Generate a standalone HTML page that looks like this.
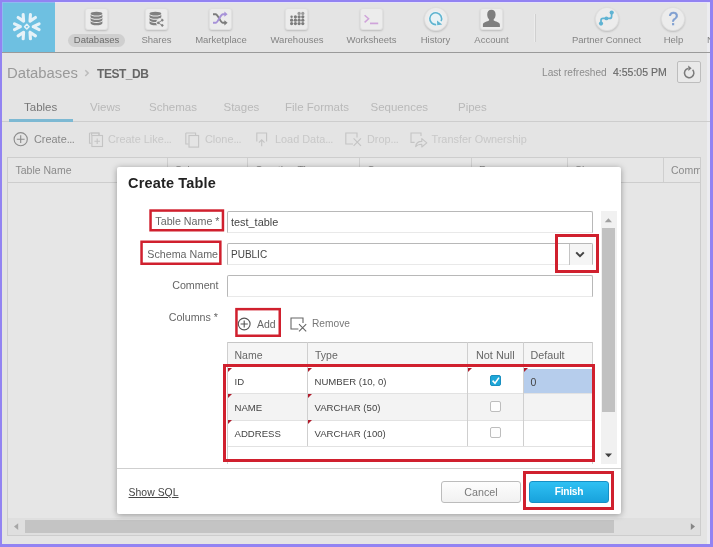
<!DOCTYPE html>
<html lang="en">
<head>
<meta charset="utf-8">
<title>Create Table</title>
<style>
*{box-sizing:border-box;margin:0;padding:0}
html,body{width:713px;height:547px;overflow:hidden;background:#9283f2}
body{font-family:"Liberation Sans",Arial,sans-serif;font-size:11px;color:#777;position:relative}
.abs{position:absolute}
#page{position:absolute;left:2px;top:2px;width:708px;height:542px;background:#e4e4e4;overflow:hidden}
/* coordinates inside #page are offset by (-2,-2) from screenshot: use wrapper shifted */
#w{position:absolute;left:-2px;top:-2px;width:713px;height:547px;will-change:transform}
.t{position:absolute;white-space:nowrap;line-height:14px;height:14px}
.c{transform:translateX(-50%)}
#logo{left:2px;top:2px;width:53px;height:50px;background:#6ec0e1}
#hline{left:2px;top:52px;width:708px;height:1px;background:#9a9a9a}
.ib{position:absolute;top:8px;width:23px;height:22px;border-radius:3px;background:#ececec;box-shadow:inset 0 0 0 1px rgba(0,0,0,.05),0 1px 2px rgba(0,0,0,.18)}
.ic{position:absolute;top:7px;width:24px;height:24px;border-radius:12px;background:#ececec;box-shadow:inset 0 0 0 1px rgba(0,0,0,.06),0 1px 2px rgba(0,0,0,.18)}
.nl{position:absolute;top:33px;font-size:9.5px;color:#848484;white-space:nowrap;line-height:14px;transform:translateX(-50%)}
.tab{position:absolute;top:100px;font-size:11.5px;color:#b9b9b9;white-space:nowrap;line-height:14px}
.tb{position:absolute;top:132px;font-size:10.9px;color:#c8c8c8;white-space:nowrap;line-height:14px}
.vs{position:absolute;top:158px;width:1px;height:24px;background:#cfcfcf}
/* dialog */
#dlg{left:117px;top:167px;width:504px;height:347px;background:#fff;border-radius:2px;box-shadow:0 1px 6px rgba(0,0,0,.35)}
.lbl{position:absolute;font-size:10.7px;color:#666;white-space:nowrap;line-height:14px;text-align:right}
.inp{position:absolute;left:227px;width:366px;height:22px;border:1px solid #b8b8b8;border-bottom-color:#e9e9e9;background:#fff;border-radius:2px 2px 0 0}
.red{position:absolute;border:2px solid #d0202e}
.cell{position:absolute;font-size:10.5px;color:#444;white-space:nowrap;line-height:14px}
.hd{position:absolute;font-size:10.5px;color:#666;white-space:nowrap;line-height:14px}
.tb i{font-style:normal;letter-spacing:-0.5px}
.tri{position:absolute;width:0;height:0;border-top:4px solid #b01c2c;border-right:4px solid transparent}
.cb{position:absolute;left:490px;width:11px;height:11px;border:1px solid #bdbdbd;border-radius:2px;background:#fdfdfd}
</style>
</head>
<body>
<div id="page"><div id="w">

<!-- header -->
<div class="abs" style="left:707px;top:2px;width:3px;height:542px;background:#ececf0"></div>
<div class="abs" id="logo"></div>
<div class="abs" style="left:2px;top:2px;width:53px;height:1px;background:#8fbaf0"></div><div class="abs" style="left:2px;top:2px;width:1px;height:50px;background:#8fbaf0"></div>
<div class="abs" id="hline"></div>
<div class="abs" style="left:55px;top:2px;width:655px;height:1px;background:#e6e2fa"></div>

<div class="ib" style="left:85px"></div>
<div class="ib" style="left:145px"></div>
<div class="ib" style="left:209px"></div>
<div class="ib" style="left:285px"></div>
<div class="ib" style="left:360px"></div>
<div class="ic" style="left:424px"></div>
<div class="ib" style="left:480px"></div>
<div class="ic" style="left:595px"></div>
<div class="ic" style="left:661px"></div>

<div class="abs" style="left:68px;top:34px;width:57px;height:13px;border-radius:7px;background:#cfcfcf"></div>
<div class="nl" style="left:96.5px;color:#6a6a6a">Databases</div>
<div class="nl" style="left:156.5px">Shares</div>
<div class="nl" style="left:221px">Marketplace</div>
<div class="nl" style="left:297px">Warehouses</div>
<div class="nl" style="left:371.5px">Worksheets</div>
<div class="nl" style="left:435.5px">History</div>
<div class="nl" style="left:491.5px">Account</div>
<div class="nl" style="left:606.5px">Partner Connect</div>
<div class="nl" style="left:673.5px">Help</div>
<div class="nl" style="left:707px;transform:none">N</div>
<div class="abs" style="left:534px;top:14px;width:1px;height:28px;background:#ececec"></div><div class="abs" style="left:535px;top:14px;width:1px;height:28px;background:#d0d0d0"></div>

<div class="t c" style="left:673.3px;top:9px;font-size:17.5px;line-height:20px;height:20px;color:#7f9fd1;-webkit-text-stroke:0.5px #7f9fd1">?</div>
<!-- breadcrumb -->
<div class="t" style="left:7px;top:65px;font-size:14.85px;line-height:16px;height:16px;color:#9a9a9a">Databases</div>
<div class="t" style="left:97px;top:66px;font-size:12px;letter-spacing:-0.45px;line-height:16px;height:16px;color:#666;font-weight:bold">TEST_DB</div>
<div class="t" style="left:542px;top:65.5px;font-size:10.15px;color:#8c8c8c">Last refreshed</div>
<div class="t" style="left:613px;top:64.8px;font-size:10.5px;color:#686868;-webkit-text-stroke:0.15px #686868">4:55:05 PM</div>
<div class="abs" style="left:677px;top:61px;width:24px;height:22px;border:1px solid #bdbdbd;border-radius:2px;background:#e9e9e9"></div>

<!-- tabs -->
<div class="tab" style="left:24px;color:#777">Tables</div>
<div class="tab" style="left:90px">Views</div>
<div class="tab" style="left:149px">Schemas</div>
<div class="tab" style="left:223.5px">Stages</div>
<div class="tab" style="left:285px">File Formats</div>
<div class="tab" style="left:370.5px">Sequences</div>
<div class="tab" style="left:458px">Pipes</div>
<div class="abs" style="left:2px;top:121px;width:708px;height:1px;background:#cdcdcd"></div>
<div class="abs" style="left:9px;top:119px;width:64px;height:3px;background:#7db9d3"></div>

<!-- toolbar -->
<div class="tb" style="left:34px;color:#888">Create<i>...</i></div>
<div class="tb" style="left:108px">Create Like<i>...</i></div>
<div class="tb" style="left:205px">Clone<i>...</i></div>
<div class="tb" style="left:275px">Load Data<i>...</i></div>
<div class="tb" style="left:367px">Drop<i>...</i></div>
<div class="tb" style="left:431.5px">Transfer Ownership</div>

<!-- table -->
<div class="abs" style="left:7px;top:157px;width:694px;height:379px;border:1px solid #cdcdcd;background:#e6e6e6"></div>
<div class="abs" style="left:8px;top:182px;width:692px;height:1px;background:#cdcdcd"></div>
<div class="vs" style="left:167px"></div>
<div class="vs" style="left:247px"></div>
<div class="vs" style="left:359px"></div>
<div class="vs" style="left:471px"></div>
<div class="vs" style="left:567px"></div>
<div class="vs" style="left:663px"></div>
<div class="t" style="left:15.5px;top:163px;font-size:10.5px;color:#8a8a8a">Table Name</div>
<div class="t" style="left:671px;top:163px;font-size:10.5px;color:#8a8a8a;width:29px;overflow:hidden">Comment</div>

<svg class="abs" style="left:0;top:0" width="713" height="547" viewBox="0 0 713 547"><g transform="translate(26.8 26.7)" fill="none" stroke="#e6f2f8" stroke-width="3.1" stroke-linecap="round" stroke-linejoin="round"><path transform="rotate(0)" d="M12.3 -2.9L6.4 0L12.3 2.9"/><path transform="rotate(60)" d="M12.3 -2.9L6.4 0L12.3 2.9"/><path transform="rotate(120)" d="M12.3 -2.9L6.4 0L12.3 2.9"/><path transform="rotate(180)" d="M12.3 -2.9L6.4 0L12.3 2.9"/><path transform="rotate(240)" d="M12.3 -2.9L6.4 0L12.3 2.9"/><path transform="rotate(300)" d="M12.3 -2.9L6.4 0L12.3 2.9"/><path d="M0 -2.3L2.3 0L0 2.3L-2.3 0Z" stroke-width="1.5"/></g><g fill="#808080"><ellipse cx="96.5" cy="13.7" rx="5.9" ry="1.9"/><path d="M90.6 14.6a5.9 1.9 0 0 0 11.8 0v2.3a5.9 1.9 0 0 1 -11.8 0z"/><path d="M90.6 17.8a5.9 1.9 0 0 0 11.8 0v2.3a5.9 1.9 0 0 1 -11.8 0z"/><path d="M90.6 21.0a5.9 1.9 0 0 0 11.8 0v2.3a5.9 1.9 0 0 1 -11.8 0z"/></g><g fill="#808080"><ellipse cx="155.4" cy="13.7" rx="5.9" ry="1.9"/><path d="M149.5 14.6a5.9 1.9 0 0 0 11.8 0v2.3a5.9 1.9 0 0 1 -11.8 0z"/><path d="M149.5 17.8a5.9 1.9 0 0 0 11.8 0v2.3a5.9 1.9 0 0 1 -11.8 0z"/><path d="M149.5 21.0a5.9 1.9 0 0 0 11.8 0v2.3a5.9 1.9 0 0 1 -11.8 0z"/></g><circle cx="160.3" cy="22.8" r="4.2" fill="#ebebeb"/><g stroke="#808080" stroke-width="0.9" fill="#808080"><path d="M162.3 20.2L158.2 22.8L162.3 25.4" fill="none"/><circle cx="162.3" cy="20.2" r="0.9"/><circle cx="158.2" cy="22.8" r="0.9"/><circle cx="162.3" cy="25.4" r="0.9"/></g><g fill="none" stroke-width="2" stroke-linecap="butt"><path d="M213 14.2h2.6c2.6 0 4.6 8.6 7.4 8.6h2" stroke="#7c7c7c"/><path d="M224.4 20.2L227.6 22.8L224.4 25.4Z" fill="#7c7c7c" stroke="none"/><path d="M213 22.8h2.6c2.6 0 4.6 -8.6 7.4 -8.6h2" stroke="#a792d8"/><path d="M224.4 11.6L227.6 14.2L224.4 16.8Z" fill="#a792d8" stroke="none"/></g><circle cx="299.1" cy="13.4" r="1.6" fill="#9a9a9a"/><circle cx="302.8" cy="13.4" r="1.6" fill="#9a9a9a"/><circle cx="291.6" cy="16.8" r="1.2" fill="#7c7c7c"/><circle cx="295.4" cy="16.8" r="1.6" fill="#7c7c7c"/><circle cx="299.1" cy="16.8" r="1.6" fill="#7c7c7c"/><circle cx="302.8" cy="16.8" r="1.6" fill="#7c7c7c"/><circle cx="291.6" cy="20.2" r="1.6" fill="#7c7c7c"/><circle cx="295.4" cy="20.2" r="1.6" fill="#7c7c7c"/><circle cx="299.1" cy="20.2" r="1.6" fill="#7c7c7c"/><circle cx="302.8" cy="20.2" r="1.6" fill="#7c7c7c"/><circle cx="291.6" cy="23.6" r="1.6" fill="#7c7c7c"/><circle cx="295.4" cy="23.6" r="1.6" fill="#7c7c7c"/><circle cx="299.1" cy="23.6" r="1.6" fill="#7c7c7c"/><circle cx="302.8" cy="23.6" r="1.6" fill="#7c7c7c"/><g fill="none" stroke="#cfa3da" stroke-width="1.5"><path d="M364.6 15.2L368.6 18.8L364.6 22.4"/><path d="M370 23.4h8.2" stroke-width="1.7"/></g><circle cx="435.7" cy="18.7" r="7.6" fill="#e9f3f6"/><g fill="none" stroke="#5fb4d0" stroke-width="1.6"><path d="M436.2 24.6A5.9 5.9 0 1 1 441.1 21.1"/><path d="M437 20.6L437.2 25.2L442.2 24.6Z" fill="#5fb4d0" stroke="none"/></g><path d="M491.4 9.8c2.6 0 4.2 1.9 4.2 4.6c0 2.2 -0.9 3.9 -1.9 4.9v1.3c1.4 0.9 6.2 1.6 6.2 4.2v2.2h-17v-2.2c0 -2.6 4.8 -3.3 6.2 -4.2v-1.3c-1 -1 -1.9 -2.7 -1.9 -4.9c0 -2.7 1.6 -4.6 4.2 -4.6z" fill="#7e7e7e"/><g fill="none" stroke="#5fb3d3" stroke-width="1.7" stroke-linejoin="round"><path d="M601 23.4v-3.2c0 -1.2 1 -1.8 2 -1.8h6.6c1.2 0 2 -0.8 2 -2v-3.6"/></g><g fill="#5fb3d3"><circle cx="601" cy="23.6" r="2.1"/><circle cx="606.4" cy="18.4" r="1.9"/><circle cx="611.7" cy="12.6" r="2.1"/></g><g fill="none" stroke="#7a7a7a" stroke-width="1.5"><path d="M692.6 69.7a4.7 4.7 0 1 1 -4.6 -1.3"/><path d="M688.2 65.6L691.6 68.2L688.4 70.9" stroke-linejoin="miter" fill="#7a7a7a" stroke="none"/></g><path d="M85.3 70.2L88.2 73.1L85.3 76" fill="none" stroke="#bcbcbc" stroke-width="1.5"/><g fill="none" stroke="#8c8c8c" stroke-width="1.1"><circle cx="20.7" cy="139.2" r="6.6"/><path d="M16.8 139.2h7.8M20.7 135.3v7.8"/></g><g fill="none" stroke="#c4c4c4" stroke-width="1.1"><path d="M91.6 135.4v-2.4h7.4v2.4"/><path d="M89.5 133h9.5v2.2M89.5 133v10.2h2"/><rect x="91.9" y="135.5" width="10.6" height="11" fill="#e4e4e4"/><path d="M94.4 141.2h5.6M97.2 138.4v5.6"/><path d="M185.8 133h9.8v2.2M185.8 133v11h2.8"/><rect x="189" y="135.5" width="9.6" height="11.6" fill="#e4e4e4"/><path d="M256.8 141.4v-8.4h9.8v8.4"/><path d="M261.7 146.2v-6.4M258.9 142.6l2.8 -2.8l2.8 2.8"/><path d="M353 144h-7.2v-11h11.2v4.6"/><path d="M353.6 138.4l7.4 7.4M361 138.4l-7.4 7.4"/><path d="M414.6 142.4h-3.6v-9.4h10v3"/><path d="M415.6 146.6c0.4 -3.6 2.6 -5.2 6.2 -5.2v-2.8l5 4.2l-5 4.2v-2.8c-2.8 0 -4.8 0.6 -6.2 2.4z" stroke-linejoin="round"/></g></svg>
<div class="t" style="left:175px;top:163px;font-size:10.5px;color:#8a8a8a">Schema</div>
<div class="t" style="left:255px;top:163px;font-size:10.5px;color:#8a8a8a">Creation Time</div>
<div class="t" style="left:367px;top:163px;font-size:10.5px;color:#8a8a8a">Owner</div>
<div class="t" style="left:479px;top:163px;font-size:10.5px;color:#8a8a8a">Rows</div>
<div class="t" style="left:575px;top:163px;font-size:10.5px;color:#8a8a8a">Size</div>
<!-- bottom scrollbar -->
<div class="abs" style="left:8px;top:518px;width:692px;height:17px;background:#dfdfdf"></div>
<div class="abs" style="left:25px;top:520px;width:589px;height:13px;background:#c4c4c4"></div>

<svg class="abs" style="left:0;top:0" width="713" height="547" viewBox="0 0 713 547"><path d="M18.2 523.2L14 526.6L18.2 530Z" fill="#a6a6a6"/><path d="M690.8 523.2L695 526.6L690.8 530Z" fill="#858585"/></svg>
<!-- dialog -->
<div class="abs" id="dlg"></div>
<div class="t" style="left:128px;top:175px;font-size:14.5px;letter-spacing:0.17px;line-height:16px;height:16px;color:#222;font-weight:bold">Create Table</div>

<div class="lbl" style="right:493.5px;top:214px">Table Name *</div>
<div class="lbl" style="right:495px;top:246.5px">Schema Name</div>
<div class="lbl" style="right:494.5px;top:278px">Comment</div>
<div class="lbl" style="right:495px;top:310px">Columns *</div>

<div class="inp" style="top:211px"></div>
<div class="inp" style="top:243px"></div>
<div class="inp" style="top:275px"></div>
<div class="cell" style="left:231px;top:215px;font-size:10.9px">test_table</div>
<div class="cell" style="left:231px;top:248px;font-size:10px">PUBLIC</div>
<div class="abs" style="left:569px;top:244px;width:23px;height:21px;background:#f5f5f5;border-left:1px solid #c4c4c4"></div>

<div class="red" style="left:555px;top:234px;width:44px;height:39px;border-width:3px"></div>

<div class="cell" style="left:257px;top:317px;color:#666">Add</div>
<div class="cell" style="left:312px;top:317px;color:#777;font-size:10.2px">Remove</div>

<!-- dialog scrollbar -->
<div class="abs" style="left:601px;top:211px;width:16px;height:253px;background:#f1f1f1"></div>
<div class="abs" style="left:602px;top:228px;width:13px;height:184px;background:#c1c1c1"></div>
<!-- grid -->
<div class="abs" style="left:227px;top:342px;width:366px;height:23px;background:#f5f5f5;border:1px solid #c6c6c6"></div>
<div class="abs" style="left:227px;top:394px;width:365px;height:26px;background:#f3f3f3"></div>
<div class="abs" style="left:524px;top:369px;width:68px;height:25px;background:#b6cdec"></div>
<div class="abs" style="left:227px;top:393px;width:365px;height:1px;background:#e2e2e2"></div>
<div class="abs" style="left:227px;top:420px;width:365px;height:1px;background:#e2e2e2"></div>
<div class="abs" style="left:227px;top:446px;width:365px;height:1px;background:#e2e2e2"></div>
<div class="abs" style="left:227px;top:342px;width:1px;height:122px;background:#cfcfcf"></div>
<div class="abs" style="left:307px;top:342px;width:1px;height:104px;background:#cfcfcf"></div>
<div class="abs" style="left:467px;top:342px;width:1px;height:104px;background:#cfcfcf"></div>
<div class="abs" style="left:523px;top:342px;width:1px;height:104px;background:#cfcfcf"></div>
<div class="abs" style="left:592px;top:342px;width:1px;height:122px;background:#cfcfcf"></div>

<div class="hd" style="left:234.5px;top:347.5px">Name</div>
<div class="hd" style="left:315px;top:347.5px">Type</div>
<div class="hd" style="left:476px;top:347.5px;font-size:10.85px">Not Null</div>
<div class="hd" style="left:530.5px;top:347.5px;font-size:10.75px">Default</div>

<div class="cell" style="left:234.5px;top:374.5px;font-size:9.6px">ID</div>
<div class="cell" style="left:234.5px;top:400.5px;font-size:9.6px">NAME</div>
<div class="cell" style="left:234.5px;top:426.5px;font-size:9.6px">ADDRESS</div>
<div class="cell" style="left:314.5px;top:374.5px;font-size:9.6px">NUMBER (10, 0)</div>
<div class="cell" style="left:314.5px;top:400.5px;font-size:9.6px">VARCHAR (50)</div>
<div class="cell" style="left:314.5px;top:426.5px;font-size:9.6px">VARCHAR (100)</div>
<div class="cell" style="left:530.5px;top:374.5px">0</div>

<div class="tri" style="left:228px;top:368px"></div>
<div class="tri" style="left:228px;top:394px"></div>
<div class="tri" style="left:228px;top:420px"></div>
<div class="tri" style="left:308px;top:368px"></div>
<div class="tri" style="left:308px;top:394px"></div>
<div class="tri" style="left:308px;top:420px"></div>
<div class="tri" style="left:468px;top:368px"></div>
<div class="tri" style="left:524px;top:368px"></div>

<div class="cb" style="top:375px;background:#1ea7d8;border-color:#1a8fc0"></div>
<div class="cb" style="top:401px"></div>
<div class="cb" style="top:427px"></div>

<svg class="abs" style="left:0;top:0" width="713" height="547" viewBox="0 0 713 547"><g fill="none" stroke="#555" stroke-width="1.1"><circle cx="244.2" cy="324" r="5.9"/><path d="M240.6 324h7.2M244.2 320.4v7.2"/></g><g fill="none" stroke="#666" stroke-width="1.1"><path d="M298.4 329h-7.4v-11h12v5"/><path d="M299 324.2l7.2 7.2M306.2 324.2l-7.2 7.2"/></g><g fill="none" stroke="#d0202e" stroke-width="2.5"><rect x="150.55" y="210.55" width="72.4" height="19.7"/><rect x="141.55" y="241.75" width="78.8" height="22"/><rect x="236.45" y="309.15" width="43.3" height="26.6"/></g><path d="M576.2 252.4L580 256.2L583.8 252.4" fill="none" stroke="#444" stroke-width="2"/><path d="M492.6 380.6L495 383.2L499 377.6" fill="none" stroke="#fff" stroke-width="1.6"/><path d="M604.8 222.2L608.4 218.2L612 222.2Z" fill="#a0a0a0"/><path d="M605 453.4L612 453.4L608.5 457.2Z" fill="#404040"/></svg>
<div class="red" style="left:223px;top:364px;width:372px;height:98px;border-width:3px"></div>


<!-- footer -->
<div class="abs" style="left:117px;top:468px;width:504px;height:1px;background:#cfcfcf"></div>
<div class="cell" style="left:128.5px;top:486px;color:#444;text-decoration:underline;font-size:10.4px;letter-spacing:0.05px">Show SQL</div>
<div class="abs" style="left:441px;top:481px;width:80px;height:22px;border:1px solid #bcbcbc;border-radius:3px;background:linear-gradient(#fdfdfd,#f1f1f1)"></div>
<div class="cell" style="left:481px;top:485px;color:#7a7a7a;font-size:10.7px;transform:translateX(-50%)">Cancel</div>
<div class="abs" style="left:529px;top:481px;width:80px;height:22px;border:1px solid #168fc4;border-radius:3px;background:linear-gradient(#2fc0f3,#18a2dc)"></div>
<div class="cell" style="left:569px;top:485px;color:#fff;font-weight:bold;font-size:10.2px;letter-spacing:-0.25px;transform:translateX(-50%)">Finish</div>
<div class="red" style="left:523px;top:471px;width:91px;height:39px;border-width:3px"></div>

</div></div>
</body>
</html>
